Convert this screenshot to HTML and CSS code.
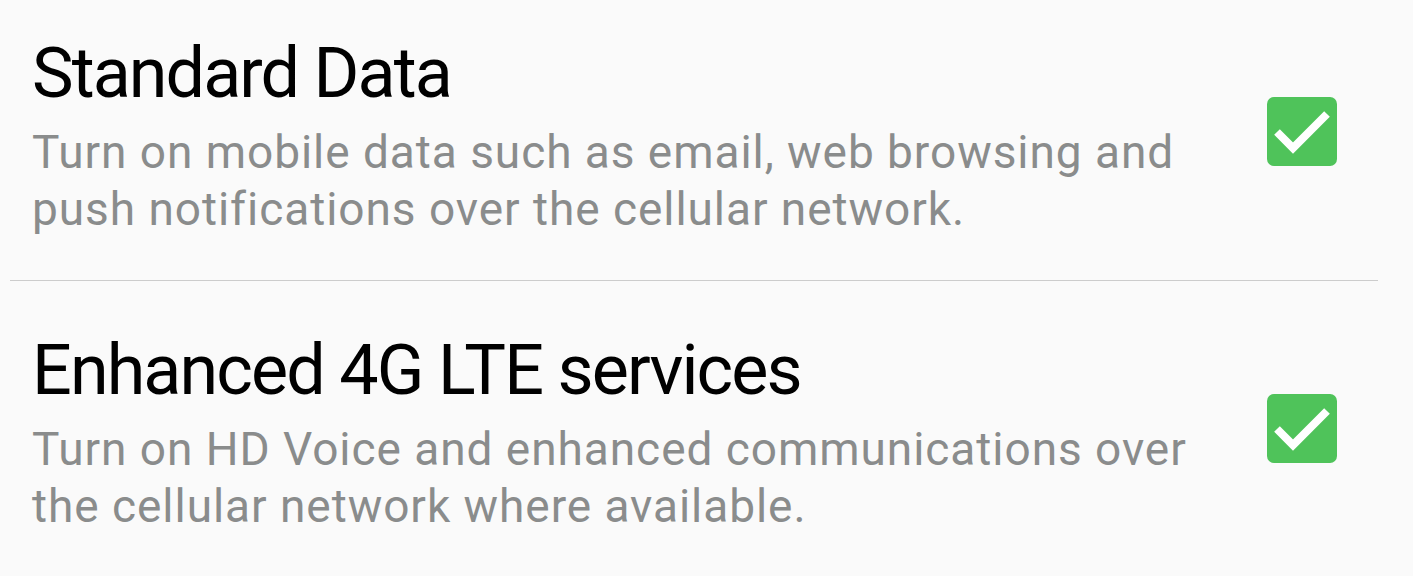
FILE: index.html
```html
<!DOCTYPE html>
<html lang="en">
<head>
    <meta charset="UTF-8">
    <meta name="viewport" content="width=device-width, initial-scale=1.0">
    <title>Mobile data settings</title>
    <link rel="stylesheet" href="styles.css">
</head>
<body>
    <div class="settings-list">
        <div class="setting-item">
            <div class="setting-text">
                <div class="setting-title">Standard Data</div>
                <div class="setting-summary">Turn on mobile data such as email, web browsing and push notifications over the cellular network.</div>
            </div>
            <div class="checkbox">
                <svg viewBox="0 0 70 70" width="70" height="70">
                    <polyline points="10,35 26,51 60,17" fill="none" stroke="#fff" stroke-width="8"/>
                </svg>
            </div>
        </div>

        <div class="divider"></div>

        <div class="setting-item second">
            <div class="setting-text">
                <div class="setting-title">Enhanced 4G LTE services</div>
                <div class="setting-summary">Turn on HD Voice and enhanced communications over the cellular network where available.</div>
            </div>
            <div class="checkbox">
                <svg viewBox="0 0 70 70" width="70" height="70">
                    <polyline points="10,35 26,51 60,17" fill="none" stroke="#fff" stroke-width="8"/>
                </svg>
            </div>
        </div>
    </div>
</body>
</html>
```

FILE: styles.css
```css
html, body {
    margin: 0;
    padding: 0;
    background-color: #fafafa;
}
body {
    font-family: Roboto, "Noto Sans", sans-serif;
}
.settings-list {
    width: 1413px;
}
.setting-item {
    display: flex;
    justify-content: space-between;
    padding: 32px 76px 42px 32px;
}
.setting-item.second {
    padding-top: 48px;
}
.setting-text {
    width: 1200px;
}
.setting-title {
    font-size: 70px;
    line-height: 82px;
    letter-spacing: -1.9px;
    color: #000;
}
.setting-summary {
    margin-top: 10px;
    font-size: 46px;
    line-height: 57px;
    letter-spacing: 0.95px;
    color: #8a8c8c;
}
.checkbox {
    flex: none;
    width: 70px;
    height: 69px;
    margin-top: 65px;
    background-color: #4fc35a;
    border-radius: 7px;
}
.checkbox svg {
    display: block;
}
.divider {
    height: 1px;
    margin: 0 35px 0 10px;
    background-color: #cccccc;
}
```
